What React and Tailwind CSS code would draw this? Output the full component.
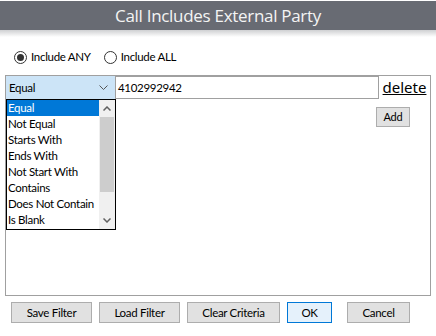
import React from "react";

const font = { fontFamily: 'Lato, "Noto Sans", sans-serif' };

function Radio({ checked, label }) {
  return (
    <div className="flex items-center gap-[4px]">
      <div className="w-[13px] h-[13px] rounded-full border border-[#333] bg-white flex items-center justify-center">
        {checked && <div className="w-[7px] h-[7px] rounded-full bg-[#333]" />}
      </div>
      <span className="text-[11.5px] tracking-[-0.3px] text-black leading-none">{label}</span>
    </div>
  );
}

function Btn({ children, w, primary }) {
  return (
    <div
      className={`h-[21px] flex items-center justify-center text-[11.5px] tracking-[-0.3px] text-black border ${
        primary ? "border-[#0078d7] bg-[#e5f1fb]" : "border-[#adadad] bg-[#e1e1e1]"
      } ${w}`}
    >
      {children}
    </div>
  );
}

const items = [
  "Equal",
  "Not Equal",
  "Starts With",
  "Ends With",
  "Not Start With",
  "Contains",
  "Does Not Contain",
  "Is Blank",
];

export default function App() {
  return (
    <div className="w-[436px] h-[336px] bg-white overflow-hidden" style={font}>
      <div className="pt-[1px]">
        <div className="h-[29px] bg-[#686b73] flex items-center justify-center">
          <span className="text-[#f4f4f4] text-[17px] tracking-[-0.3px] leading-none" style={{ fontFamily: '"Open Sans", sans-serif' }}>
            Call Includes External Party
          </span>
        </div>
        <div className="h-[7px] bg-gradient-to-b from-[#cfd0d2] to-white" />
      </div>

      <div className="flex items-center gap-[13px] pl-[14px] mt-[13px] h-[14px]">
        <Radio checked label="Include ANY" />
        <Radio label="Include ALL" />
      </div>

      <div className="mx-[5px] mt-[11px] h-[221px] border border-[#a0a0a0] relative">
        <div className="flex items-stretch h-[23px]">
          <div className="w-[109px] bg-[#cce4f7] border border-[#cce4f7] flex items-center justify-between pl-[2px] pr-[6px]">
            <span className="text-[11.5px] tracking-[-0.3px] text-black">Equal</span>
            <svg width="9" height="6" viewBox="0 0 9 6">
              <path d="M0.5 0.5 L4.5 4.5 L8.5 0.5" fill="none" stroke="#555" strokeWidth="1" />
            </svg>
          </div>
          <div className="w-[264px] border border-[#a0a0a0] flex items-center pl-[2px]">
            <span className="text-[11.5px] tracking-[-0.3px] text-black">4102992942</span>
          </div>
          <div className="flex-1 flex items-center justify-center">
            <span className="text-[15px] text-black underline leading-none" style={{ fontFamily: '"Noto Sans", sans-serif' }}>delete</span>
          </div>
        </div>
        <div className="flex justify-end pr-[20px] mt-[8px]">
          <div className="w-[34px] h-[20px] bg-[#e1e1e1] border border-[#adadad] flex items-center justify-center text-[11px] tracking-[-0.2px] text-black">
            Add
          </div>
        </div>

        <div className="absolute left-0 top-[23px] w-[110px] h-[131px] border border-black bg-white flex">
          <div className="flex-1 min-w-0 overflow-hidden flex flex-col">
            {items.map((t, i) => (
              <div
                key={t}
                className={`h-[16px] flex items-center pl-[1px] text-[11.5px] tracking-[-0.3px] leading-none whitespace-nowrap ${
                  i === 0 ? "bg-[#0078d7] text-white" : "text-black"
                }`}
              >
                {t}
              </div>
            ))}
          </div>
          <div className="w-[16px] shrink-0 bg-[#f0f0f0] flex flex-col">
            <div className="h-[17px] flex items-center justify-center">
              <svg width="8" height="5" viewBox="0 0 8 5">
                <path d="M0.5 4.5 L4 1 L7.5 4.5" fill="none" stroke="#606060" strokeWidth="1.5" />
              </svg>
            </div>
            <div className="mx-[1px] h-[75px] bg-[#cdcdcd]" />
            <div className="flex-1" />
            <div className="h-[17px] flex items-center justify-center">
              <svg width="8" height="5" viewBox="0 0 8 5">
                <path d="M0.5 0.5 L4 4 L7.5 0.5" fill="none" stroke="#606060" strokeWidth="1.5" />
              </svg>
            </div>
          </div>
        </div>
      </div>

      <div className="flex items-center pl-[11px] mt-[6px] gap-[7px]">
        <Btn w="w-[81px]">Save Filter</Btn>
        <Btn w="w-[81px]">Load Filter</Btn>
        <Btn w="w-[93px]">Clear Criteria</Btn>
        <Btn w="w-[45px]" primary>OK</Btn>
        <div className="w-[1px]" />
        <Btn w="w-[63px]">Cancel</Btn>
      </div>
    </div>
  );
}
